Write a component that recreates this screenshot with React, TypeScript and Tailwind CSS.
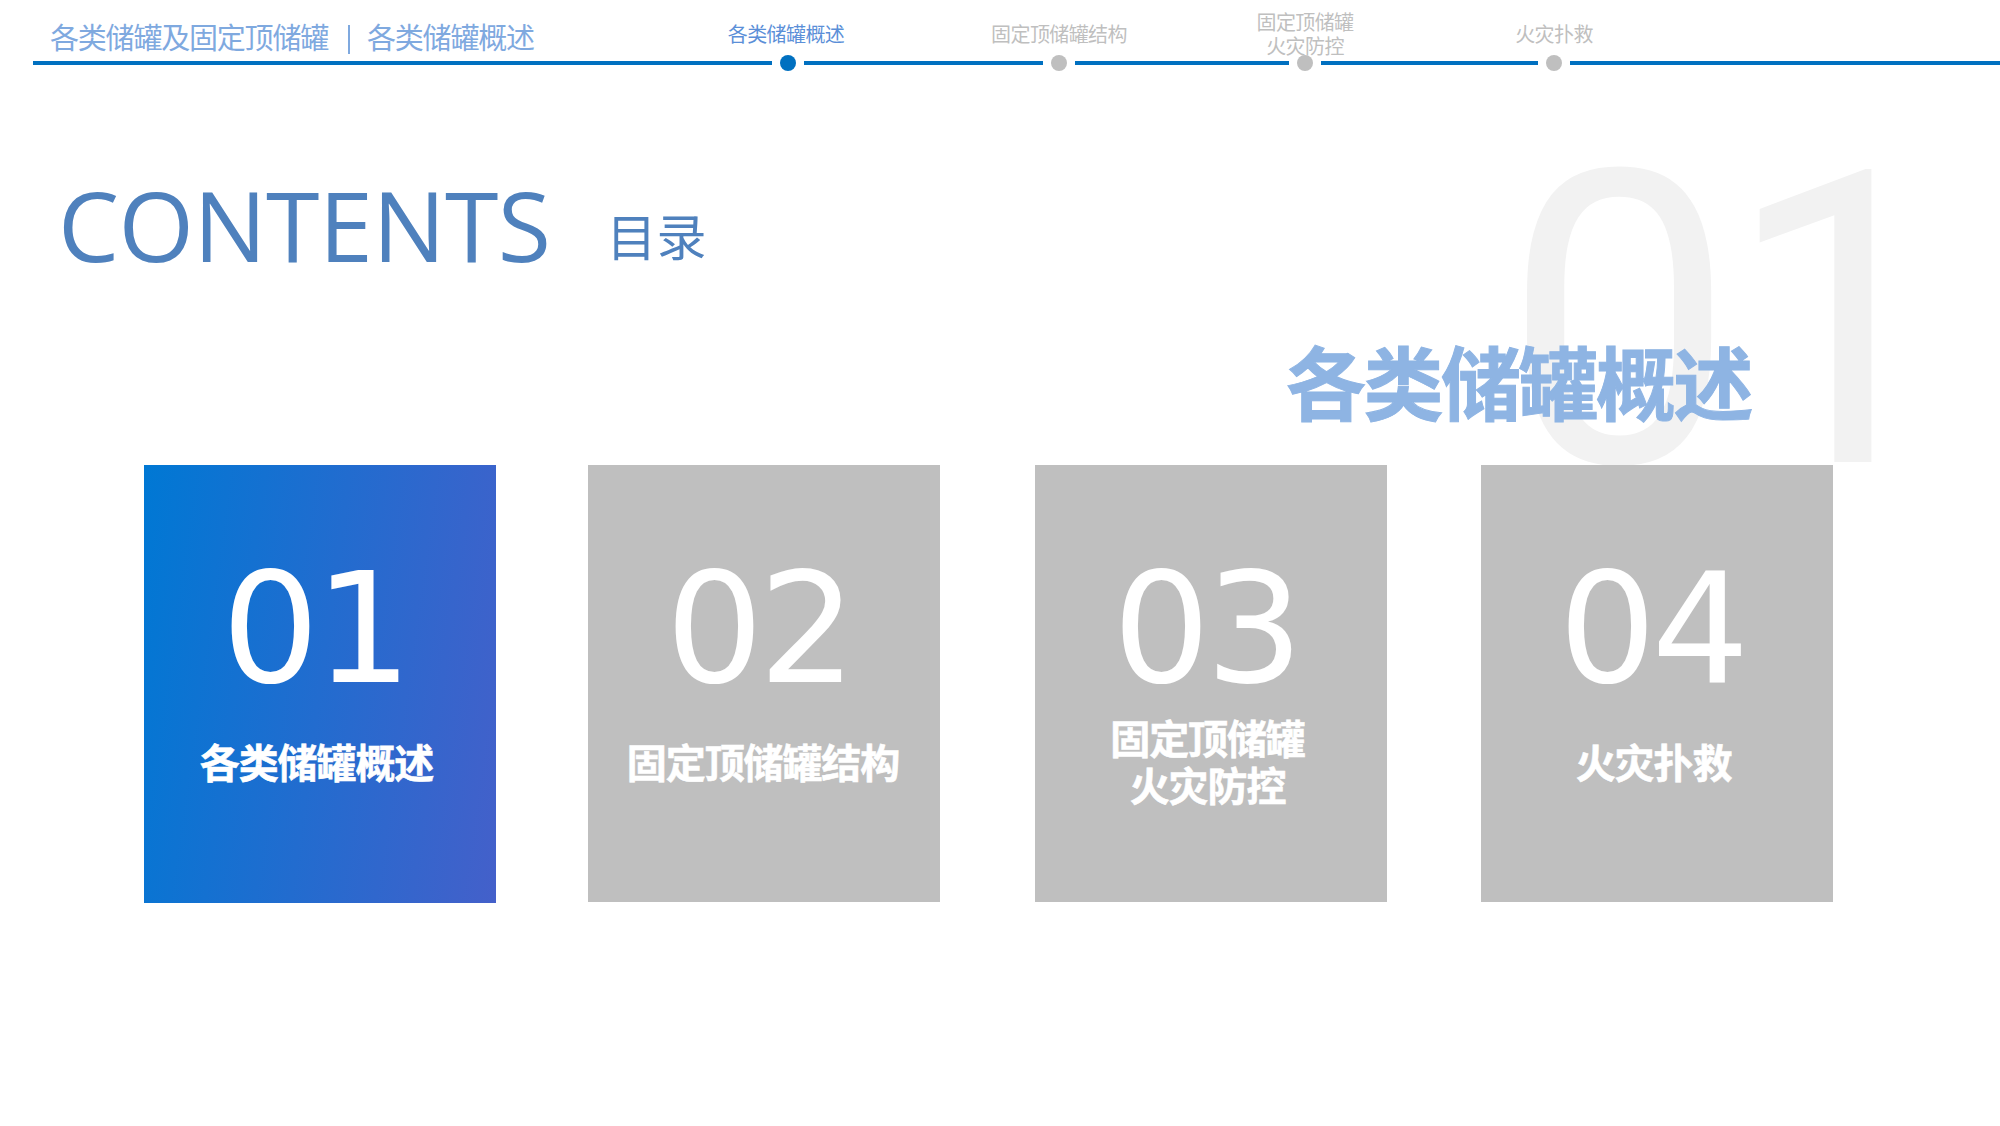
const cjk = "font-['Noto_Sans_CJK_SC','Microsoft_YaHei',sans-serif]";

const steps = [
  { label: ['各类储罐概述'], active: true, seg: 739, pos: 'bottom-[25px] left-[calc(50%-2px)]' },
  { label: ['固定顶储罐结构'], active: false, seg: 239, pos: 'bottom-[25px] left-1/2' },
  { label: ['固定顶储罐', '火灾防控'], active: false, seg: 214, pos: 'bottom-[13px] left-1/2' },
  { label: ['火灾扑救'], active: false, seg: 217, pos: 'bottom-[25px] left-1/2' },
];

const cards = [
  { num: '01', title: ['各类储罐概述'], active: true, ml: 'ml-[144px]', titleMl: 'ml-0' },
  { num: '02', title: ['固定顶储罐结构'], active: false, ml: 'ml-[92px]', titleMl: 'ml-[5px]' },
  { num: '03', title: ['固定顶储罐', '火灾防控'], active: false, ml: 'ml-[95px]', titleMl: 'ml-0' },
  { num: '04', title: ['火灾扑救'], active: false, ml: 'ml-[94px]', titleMl: 'ml-0' },
];

function Rail() {
  return (
    <div className="flex h-[17px] items-center pl-[33px]">
      {steps.map((s) => (
        <div key={s.label[0]} className="flex items-center">
          <div className="h-1 bg-[#0070c0]" style={{ width: s.seg }} />
          <div className="relative mx-2 h-4 w-4 rounded-full">
            <div className={`h-4 w-4 rounded-full ${s.active ? 'bg-[#0070c0]' : 'bg-[#bfbfbf]'}`} />
            <div
              className={`absolute -translate-x-1/2 whitespace-nowrap text-center text-[20px] leading-[24px] tracking-[-0.6px] ${s.pos} ${
                s.active ? 'text-[#5b8fd8]' : 'text-[#bfbfbf]'
              }`}
            >
              {s.label.map((l) => (
                <div key={l}>{l}</div>
              ))}
            </div>
          </div>
        </div>
      ))}
      <div className="h-1 flex-1 bg-[#0070c0]" />
    </div>
  );
}

function Card({ num, title, active, ml, titleMl }: { num: string; title: string[]; active: boolean; ml: string; titleMl: string }) {
  return (
    <div
      className={`flex w-[352px] flex-col items-center pr-[7px] text-white ${ml} ${
        active ? 'h-[438px] bg-[linear-gradient(98deg,#0078d4,#4460ca)]' : 'h-[437px] bg-[#bfbfbf]'
      }`}
    >
      <div className="mr-[4px] mt-[76px] h-[170px] font-['DejaVu_Sans',sans-serif] text-[154px] leading-[176px] tracking-[-5px]">{num}</div>
      <div className={`mt-[3px] flex h-[94px] flex-col justify-center text-center text-[40px] font-bold leading-[47px] tracking-[-1.1px] [-webkit-text-stroke:0.6px_white] ${titleMl}`}>
        {title.map((t) => (
          <div key={t}>{t}</div>
        ))}
      </div>
    </div>
  );
}

export default function App() {
  return (
    <div className={`relative h-[1126px] w-[2000px] overflow-hidden bg-white ${cjk}`}>
      {/* watermark number sits behind the cards */}
      <div className="absolute left-[1504px] top-[83px] font-['Roboto',sans-serif] text-[410px] leading-[478px] tracking-[-9px] text-[#f2f2f2]">
        01
      </div>

      <div className="relative">
        <div className="flex h-[54px] translate-y-px items-end pl-[50px] text-[29px] leading-[38px] tracking-[-1.2px] text-[#7fa9df]">
          <span>各类储罐及固定顶储罐</span>
          <span className="ml-[20px] mr-[17px] mb-[1px] h-[29px] w-[2px] bg-[#7fa9df]" />
          <span>各类储罐概述</span>
        </div>
        <Rail />

        <div className="mt-[93px] flex items-end pl-[58px] text-[#4f81bd]">
          <span className="font-['Open_Sans',sans-serif] text-[97px] font-normal leading-[120px] tracking-[-0.5px]">CONTENTS</span>
          <span className="mb-[20px] ml-[56px] text-[50px] leading-[60px]">目录</span>
        </div>

        <div className="mt-[45px] pl-[1286px] text-[80px] font-bold leading-[100px] tracking-[-2.5px] text-[#8eb4e3] [-webkit-text-stroke:1px_#8eb4e3]">
          各类储罐概述
        </div>

        <div className="mt-[36px] flex">
          {cards.map((c) => (
            <Card key={c.num} {...c} />
          ))}
        </div>
      </div>
    </div>
  );
}
